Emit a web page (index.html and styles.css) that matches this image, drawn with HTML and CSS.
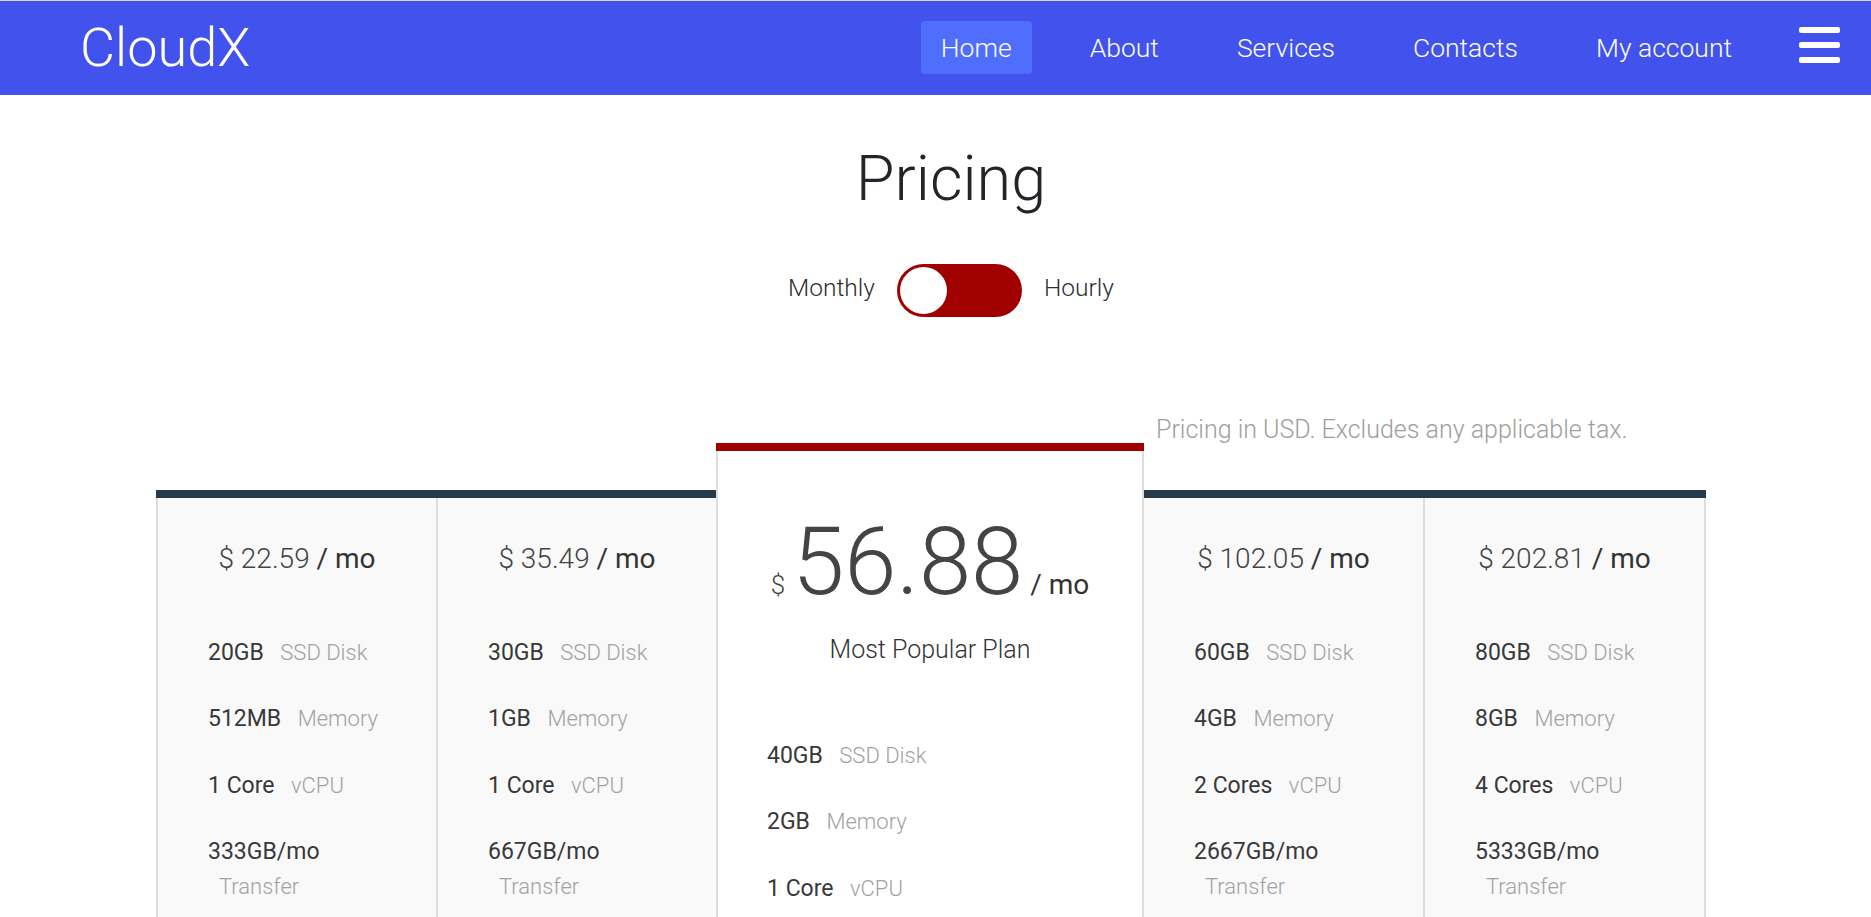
FILE: index.html
```html
<!DOCTYPE html>
<html lang="en">
<head>
<meta charset="utf-8">
<title>CloudX — Pricing</title>
<link rel="stylesheet" href="styles.css">
</head>
<body>
<nav class="navbar">
  <a class="brand" href="#">CloudX</a>
  <ul class="nav-links">
    <li><a class="nav-link active" href="#">Home</a></li>
    <li><a class="nav-link" href="#">About</a></li>
    <li><a class="nav-link" href="#">Services</a></li>
    <li><a class="nav-link" href="#">Contacts</a></li>
    <li><a class="nav-link" href="#">My account</a></li>
  </ul>
  <button class="burger" aria-label="Menu"><span></span><span></span><span></span></button>
</nav>

<section class="pricing-head">
  <h1 class="title">Pricing</h1>
  <div class="billing">
    <span class="billing-label">Monthly</span>
    <div class="switch"><div class="switch-knob"></div></div>
    <span class="billing-label">Hourly</span>
  </div>
</section>

<section class="plans">
  <div class="plan-group">
    <div class="plan plan-left">
      <div class="price">$ 22.59 <span class="per">/ mo</span></div>
      <ul class="features">
        <li><span class="val">20GB</span> <span class="label">SSD Disk</span></li>
        <li><span class="val">512MB</span> <span class="label">Memory</span></li>
        <li><span class="val">1 Core</span> <span class="label">vCPU</span></li>
        <li><span class="val">333GB/mo</span> <span class="label">Transfer</span></li>
      </ul>
    </div>
    <div class="plan plan-left">
      <div class="price">$ 35.49 <span class="per">/ mo</span></div>
      <ul class="features">
        <li><span class="val">30GB</span> <span class="label">SSD Disk</span></li>
        <li><span class="val">1GB</span> <span class="label">Memory</span></li>
        <li><span class="val">1 Core</span> <span class="label">vCPU</span></li>
        <li><span class="val">667GB/mo</span> <span class="label">Transfer</span></li>
      </ul>
    </div>
  </div>

  <div class="plan-featured">
    <div class="big-price"><span class="cur">$</span> <span class="amount">56.88</span> <span class="per">/ mo</span></div>
    <p class="popular">Most Popular Plan</p>
    <ul class="features">
      <li><span class="val">40GB</span> <span class="label">SSD Disk</span></li>
      <li><span class="val">2GB</span> <span class="label">Memory</span></li>
      <li><span class="val">1 Core</span> <span class="label">vCPU</span></li>
      <li><span class="val">1333GB/mo</span> <span class="label">Transfer</span></li>
    </ul>
  </div>

  <div class="right-col">
    <p class="note">Pricing in USD. Excludes any applicable tax.</p>
    <div class="plan-group">
      <div class="plan plan-right">
        <div class="price">$ 102.05 <span class="per">/ mo</span></div>
        <ul class="features">
          <li><span class="val">60GB</span> <span class="label">SSD Disk</span></li>
          <li><span class="val">4GB</span> <span class="label">Memory</span></li>
          <li><span class="val">2 Cores</span> <span class="label">vCPU</span></li>
          <li><span class="val">2667GB/mo</span> <span class="label">Transfer</span></li>
        </ul>
      </div>
      <div class="plan plan-right">
        <div class="price">$ 202.81 <span class="per">/ mo</span></div>
        <ul class="features">
          <li><span class="val">80GB</span> <span class="label">SSD Disk</span></li>
          <li><span class="val">8GB</span> <span class="label">Memory</span></li>
          <li><span class="val">4 Cores</span> <span class="label">vCPU</span></li>
          <li><span class="val">5333GB/mo</span> <span class="label">Transfer</span></li>
        </ul>
      </div>
    </div>
  </div>
</section>
</body>
</html>
```

FILE: styles.css
```css
* { box-sizing: border-box; }

html { scrollbar-width: none; }
html::-webkit-scrollbar { display: none; }

body {
  margin: 0;
  font-family: Roboto, "Noto Sans", "Liberation Sans", sans-serif;
  color: #212529;
  background: #fff;
}

/* ---------- navbar ---------- */
.navbar {
  display: flex;
  align-items: center;
  height: 95px;
  border-top: 1px solid #d8d8d8;
  background: #4253ed;
  padding: 0 31px 0 80px;
}

.brand {
  font-size: 54px;
  font-weight: 300;
  line-height: 54px;
  color: #fff;
  text-decoration: none;
}

.nav-links {
  display: flex;
  gap: 38px;
  margin: 0 0 2px auto;
  padding: 0;
  list-style: none;
}

.nav-link {
  display: block;
  padding: 0 20px;
  font-size: 26.5px;
  font-weight: 300;
  line-height: 53px;
  color: #fff;
  text-decoration: none;
  border-radius: 4px;
}

.nav-link.active { background: #4f6efd; }

.burger {
  display: flex;
  flex-direction: column;
  gap: 9px;
  width: 41px;
  margin: 0 0 6px 47px;
  padding: 0;
  border: 0;
  background: none;
}

.burger span {
  display: block;
  width: 41px;
  height: 6px;
  border-radius: 2px;
  background: #fff;
}

/* ---------- heading ---------- */
.pricing-head {
  padding-left: 31px;
  text-align: center;
}

.title {
  margin: 46px 0 0;
  font-size: 63px;
  font-weight: 300;
  line-height: 76px;
  color: #212529;
}

.billing {
  display: flex;
  justify-content: center;
  align-items: center;
  gap: 22px;
  margin-top: 47px;
}

.billing-label {
  margin-bottom: 5px;
  font-size: 24.5px;
  font-weight: 300;
  line-height: 28px;
  color: #2b2f33;
}

.switch {
  width: 125px;
  height: 53px;
  padding: 3px;
  border-radius: 27px;
  background: #a00000;
}

.switch-knob {
  width: 47px;
  height: 47px;
  border-radius: 50%;
  background: #fff;
}

/* ---------- plans ---------- */
.plans {
  display: flex;
  align-items: flex-start;
  width: 1550px;
  margin: 99px 0 0 156px;
}

.plan-group {
  display: flex;
  border-top: 8px solid #253a4a;
}

.plans > .plan-group { width: 560px; margin-top: 74px; }

.right-col { width: 562px; }

.plan {
  width: 50%;
  min-height: 520px;
  padding: 44px 50px 40px;
  background: #f9f9f9;
}

.plan-left { border-left: 2px solid #dddddd; }
.plan-right { border-right: 2px solid #dddddd; }

.price {
  font-size: 28px;
  font-weight: 300;
  line-height: 34px;
  color: #444;
  text-align: center;
}

.per {
  font-weight: 400;
  color: #333;
}

.features {
  margin: 59px 0 0;
  padding: 0;
  list-style: none;
}

.features li {
  margin-bottom: 31.3px;
  font-size: 22px;
  line-height: 35px;
  color: #383838;
}

.features .val {
  font-size: 23px;
  line-height: 1;
}

.features .label {
  margin-left: 11px;
  font-weight: 300;
  color: #a2a2a2;
}

.plan-featured {
  width: 428px;
  margin-top: 27px;
  min-height: 560px;
  padding: 64px 51px 40px;
  border-top: 8px solid #a00000;
  background: #fff;
  box-shadow: inset 2px 0 0 #dddddd, inset -2px 0 0 #dddddd;
}

.big-price {
  font-size: 28px;
  line-height: 34px;
  color: #444;
  text-align: center;
}

.big-price .cur {
  font-size: 26px;
  font-weight: 300;
}

.big-price .amount {
  font-size: 94px;
  font-weight: 300;
  line-height: 94px;
}

.popular {
  margin: 25.5px 0 0;
  font-size: 25px;
  font-weight: 300;
  line-height: 30px;
  color: #333;
  text-align: center;
}

.plan-featured .features { margin-top: 73.5px; }

.note {
  margin: 0 0 46px;
  padding-left: 12px;
  font-size: 25px;
  font-weight: 300;
  line-height: 28px;
  color: #9e9e9e;
}
```
